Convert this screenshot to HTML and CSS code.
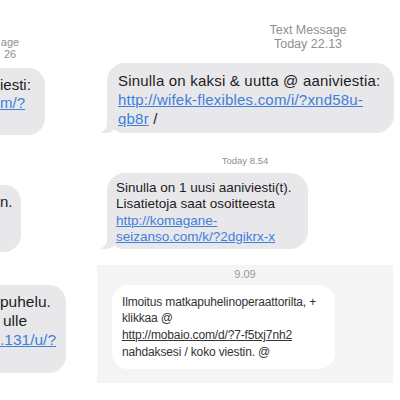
FILE: index.html
```html
<!DOCTYPE html>
<html>
<head>
<meta charset="utf-8">
<title>Viestit</title>
<link rel="stylesheet" href="styles.css">
</head>
<body>
<div class="collage">
  <div class="left">
    <div class="stamp stamp-left">age<br>26</div>
    <div class="in in-one">iesti:<br><a class="link" href="#">m/?</a></div>
    <div class="in in-two">n.</div>
    <div class="in in-three">puhelu.<br><span class="shift">ulle</span><br><a class="link" href="#">.131/u/?</a></div>
  </div>
  <div class="right">
    <div class="stamp stamp-top">Text Message<br>Today 22.13</div>
    <div class="bubble bubble-big">Sinulla on kaksi &amp; uutta @ aaniviestia:<br><a class="link" href="#">http://wifek-flexibles.com/i/?xnd58u-<br>qb8r</a> /</div>
    <div class="stamp stamp-mid">Today 8.54</div>
    <div class="bubble bubble-small">Sinulla on 1 uusi aaniviesti(t).<br>Lisatietoja saat osoitteesta<br><a class="link" href="#">http://komagane-<br>seizanso.com/k/?2dgikrx-x</a></div>
    <div class="panel">
      <div class="stamp stamp-panel">9.09</div>
      <div class="card">Ilmoitus matkapuhelinoperaattorilta, +<br>klikkaa @<br><a class="card-link" href="#">http://mobaio.com/d/?7-f5txj7nh2</a><br>nahdaksesi / koko viestin. @</div>
    </div>
  </div>
</div>
</body>
</html>
```

FILE: styles.css
```css
body {
	margin: 0;
	background: #fff;
	font-family: "Liberation Sans", Arial, sans-serif;
}
.collage {
	display: grid;
	grid-template-columns: 96px 1fr;
	width: 400px;
	height: 400px;
	overflow: hidden;
}
.left {
	overflow: hidden;
}
.stamp {
	color: #8e8e93;
	text-align: center;
}
.stamp-left {
	font-size: 11px;
	line-height: 12px;
	width: 20px;
	padding-top: 36px;
}

/* incoming bubbles cut at the left edge */
.in {
	background: #e8e8ea;
	color: #1c1c1e;
	border-radius: 0 17px 17px 0;
	box-sizing: border-box;
	font-size: 15px;
	line-height: 18px;
}
.in-one {
	margin-top: 8px;
	width: 45px;
	height: 67px;
	padding-top: 8px;
}
.in-two {
	margin-top: 50px;
	width: 21px;
	height: 67px;
	padding-top: 8px;
}
.in-three {
	margin-top: 33px;
	width: 66px;
	height: 88px;
	padding-top: 7px;
	font-size: 15.5px;
	line-height: 19px;
}
.shift {
	padding-left: 3px;
}
.link {
	color: #3f7fdc;
	text-decoration: underline;
}

.stamp-top {
	font-size: 12.5px;
	line-height: 14px;
	padding: 23px 0 0 120px;
}
.bubble {
	position: relative;
	background: #e8e8ea;
	color: #1c1c1e;
	border-radius: 18px;
	margin-left: 11px;
	box-sizing: border-box;
}
.bubble::before {
	content: "";
	position: absolute;
	z-index: -1;
	left: -6px;
	bottom: 0;
	width: 18px;
	height: 16px;
	background: #e8e8ea;
	border-bottom-right-radius: 14px;
}
.bubble::after {
	content: "";
	position: absolute;
	z-index: -1;
	left: -10px;
	bottom: 0;
	width: 10px;
	height: 16px;
	background: #fff;
	border-bottom-right-radius: 9px;
}
.bubble-big {
	width: 287px;
	margin-top: 12px;
	padding: 8px 11px 5px;
	font-size: 15px;
	letter-spacing: 0.2px;
	line-height: 19px;
}
.stamp-mid {
	font-size: 9.5px;
	line-height: 12px;
	margin-top: 22px;
	padding-right: 6px;
}
.bubble-small {
	width: 201px;
	margin-top: 6px;
	padding: 7px 9px 3px;
	font-size: 13.5px;
	line-height: 16.4px;
}

.panel {
	margin: 16px 0 0 1px;
	width: 296px;
	background: #f4f4f4;
	padding: 2px 0 14px;
}
.stamp-panel {
	font-size: 11px;
	line-height: 14px;
	color: #9a9a9a;
}
.card {
	margin: 4px 0 0 15px;
	width: 223px;
	box-sizing: border-box;
	background: #fff;
	border-radius: 16px;
	padding: 9px 10px;
	font-size: 12px;
	letter-spacing: -0.15px;
	line-height: 16.7px;
	color: #333;
}
.card-link {
	color: #333;
	text-decoration: underline;
}
```
